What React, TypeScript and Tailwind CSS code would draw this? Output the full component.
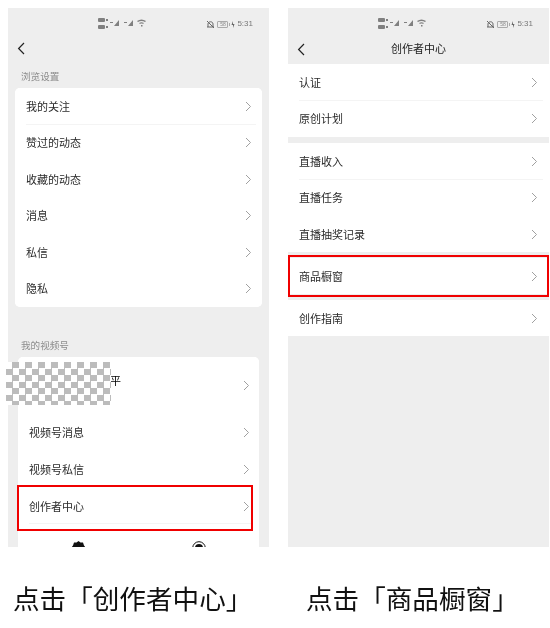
import type { ReactNode } from "react";

const cjk = "font-['Noto_Sans_CJK_SC','Noto_Sans',sans-serif]";

function Chevron() {
  return (
    <svg width="7" height="11" viewBox="0 0 7 11" fill="none" className="shrink-0">
      <path d="M1 1l4.5 4.5L1 10" stroke="#a0a0a0" strokeWidth="1" />
    </svg>
  );
}

function BackArrow() {
  return (
    <svg width="9" height="13" viewBox="0 0 9 13" fill="none">
      <path d="M7 1L1.600 6.500 7 12" stroke="#222" strokeWidth="1.200" />
    </svg>
  );
}

function StatusBar() {
  return (
    <div className="h-8 shrink-0 flex items-center pl-[90px] pr-[16px]">
      <svg width="49" height="12" viewBox="0 0 49 12" fill="#808080">
        <rect x="0" y="0" width="7" height="4" rx="1" />
        <rect x="8" y="1" width="2" height="2" />
        <rect x="0" y="7" width="7" height="4" rx="1" />
        <rect x="8" y="8" width="2" height="2" />
        <path d="M12 4h3v1h-3zM21 2v6h-5z" />
        <path d="M26 4h3v1h-3zM35 2v6h-5z" />
        <path d="M39 3c3-2 6-2 9 0l-1 1c-2-1.500-5-1.500-7 0zM41 5c2-1 3-1 5 0l-1 1c-1-.6-2-.6-3 0zM43 7h1.500v1.500H43z" />
      </svg>
      <div className="ml-auto flex items-center">
        <svg width="9" height="9" viewBox="0 0 9 9" fill="none" stroke="#666" strokeWidth="1">
          <path d="M2 7V4c0-3 5-3 5 0v3M1 7h7M1 1l7 7" />
        </svg>
        <div className="ml-[2px] w-[11px] h-[7px] rounded-[1px] border border-[#aaa] flex items-center justify-center font-['Liberation_Sans',sans-serif] text-[5px] leading-none text-[#888]">
          58
        </div>
        <svg width="7" height="7" viewBox="0 0 7 7" className="ml-px">
          <rect x="0" y="2" width="1" height="3" fill="#aaa" />
          <path d="M4 0L2.500 4H4v3l1.500-4H4z" fill="#666" />
        </svg>
        <span className="ml-px font-['Liberation_Sans',sans-serif] text-[8px] text-[#777]">5:31</span>
      </div>
    </div>
  );
}

function Row({ label, className = "h-[36.500px]", divider = false, pr = "pr-[10px]" }: {
  label: ReactNode;
  className?: string;
  divider?: boolean;
  pr?: string;
}) {
  return (
    <div className={`relative flex items-center justify-between bg-white pl-[11px] ${pr} ${className}`}>
      <span className="text-[11px] leading-none text-[#2a2a2a]">{label}</span>
      <Chevron />
      {divider && <div className="absolute left-[11px] right-[6px] bottom-0 h-px bg-[#f4f4f4]" />}
    </div>
  );
}

function LeftPhone() {
  return (
    <div className="relative w-[261px] h-[539px] bg-[#eeeeee] overflow-hidden flex flex-col">
      <StatusBar />
      <div className="h-4 shrink-0 flex items-center pl-[9px]">
        <BackArrow />
      </div>
      <div className="h-8 shrink-0 flex items-center pl-[13px] pt-[8px] text-[9.600px] text-[#8c8c8c]">
        浏览设置
      </div>
      <div className="mx-[7px] rounded-[5px] bg-white overflow-hidden">
        <Row label="我的关注" divider />
        <Row label="赞过的动态" />
        <Row label="收藏的动态" />
        <Row label="消息" />
        <Row label="私信" />
        <Row label="隐私" />
      </div>
      <div className="h-[50px] shrink-0 flex items-end pb-[5px] pl-[13px] text-[9.600px] text-[#8c8c8c]">
        我的视频号
      </div>
      <div className="mx-[10px] flex-1 rounded-t-[5px] bg-white overflow-hidden">
        <Row
          label={<span className="block pl-[81px] pb-[10px] text-black">平</span>}
          className="h-[57px]"
          pr="pr-[9px]"
        />
        <Row label="视频号消息" pr="pr-[9px]" className="h-[37px]" />
        <Row label="视频号私信" pr="pr-[9px]" className="h-[37px]" />
        <Row label="创作者中心" pr="pr-[9px]" className="h-[36px]" divider />
        <div className="flex justify-between pl-[53px] pr-[53px] pt-[17px]">
          <svg width="15" height="14" viewBox="0 0 15 14" fill="#111">
            <path d="M7.500 0l2 1.500h2.500l1 3 2 2.500-2 2.500-1 3H9.500l-2 1.500-2-1.500H3l-1-3L0 7l2-2.500 1-3h2.500z" />
          </svg>
          <svg width="14" height="14" viewBox="0 0 14 14" fill="#111">
            <circle cx="7" cy="7" r="6.300" fill="none" stroke="#111" />
            <circle cx="7" cy="7" r="4" />
          </svg>
        </div>
      </div>
      <div className="absolute left-[9px] top-[477px] w-[236px] h-[46px] border-2 border-[#f00000]" />
    </div>
  );
}

function RightPhone() {
  return (
    <div className="relative w-[261px] h-[539px] bg-[#eeeeee] overflow-hidden flex flex-col">
      <StatusBar />
      <div className="relative h-6 shrink-0 flex items-center justify-center">
        <div className="absolute left-[9px] top-[3px]">
          <BackArrow />
        </div>
        <span className="pb-[8px] text-[11px] text-[#222]">创作者中心</span>
      </div>
      <Row label="认证" divider pr="pr-[11px]" />
      <Row label="原创计划" pr="pr-[11px]" />
      <div className="h-[6px] shrink-0" />
      <Row label="直播收入" divider pr="pr-[11px]" />
      <Row label="直播任务" pr="pr-[11px]" />
      <Row label="直播抽奖记录" pr="pr-[11px]" className="h-[36px]" />
      <div className="h-[6px] shrink-0" />
      <Row label="商品橱窗" pr="pr-[11px]" className="h-[36px]" />
      <div className="h-[6px] shrink-0" />
      <Row label="创作指南" pr="pr-[11px]" className="h-[36px]" />
      <div className="absolute left-0 top-[247px] w-[261px] h-[42px] border-2 border-[#f00000]" />
    </div>
  );
}

export default function App() {
  return (
    <div className={`relative w-[550px] h-[628px] bg-white overflow-hidden blur-[0.35px] ${cjk}`}>
      <div className="flex gap-[19px] pl-[8px] pt-[8px]">
        <LeftPhone />
        <RightPhone />
      </div>
      <div className="flex pl-[13px] pt-[31px] text-[26.600px] leading-[40px] text-[#111]">
        <span className="w-[293px]">点击「创作者中心」</span>
        <span>点击「商品橱窗」</span>
      </div>
      <div className="absolute left-[6px] top-[362px] w-[105px] h-[43px] bg-[repeating-conic-gradient(#bcbcbc_0_25%,#ffffff_0_50%)] bg-[length:13px_13px]" />
    </div>
  );
}
